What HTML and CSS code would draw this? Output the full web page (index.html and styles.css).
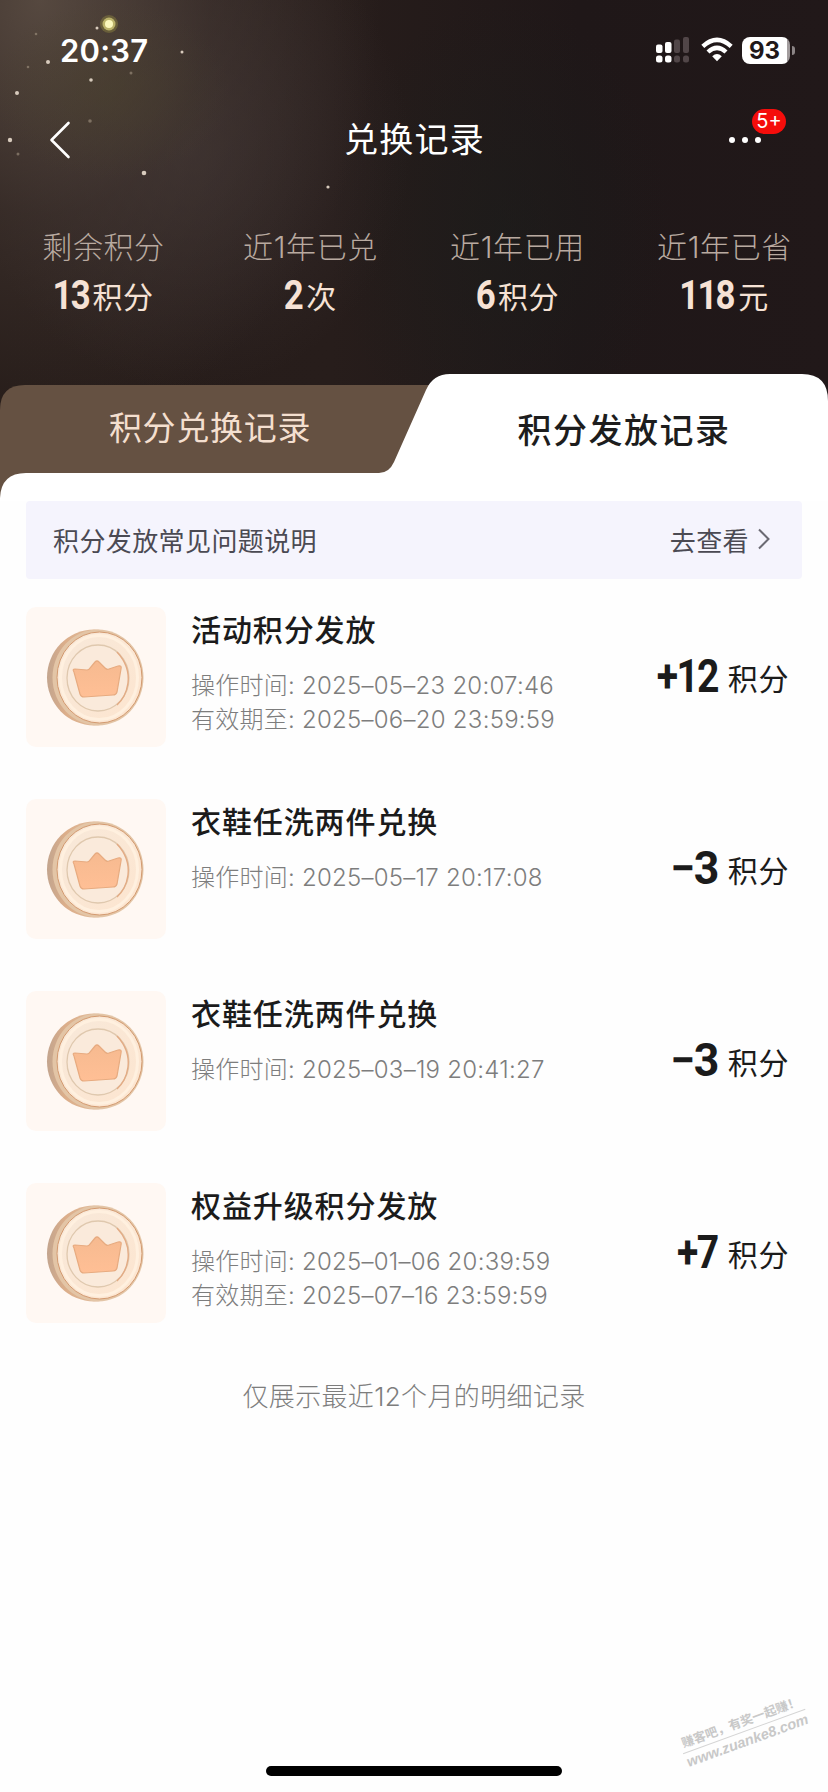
FILE: index.html
```
<!DOCTYPE html>
<html lang="zh-CN">
<head>
<meta charset="utf-8">
<title>兑换记录</title>
<link rel="stylesheet" href="styles.css">
</head>
<body>
<svg class="defs" width="0" height="0" aria-hidden="true">
  <defs>
    <linearGradient id="edge" x1="0" y1="0" x2="1" y2="0"><stop offset="0" stop-color="#c3a58e"/><stop offset=".2" stop-color="#dcae8a"/><stop offset="1" stop-color="#e6cdb0"/></linearGradient>
    <linearGradient id="face" x1="0" y1="0" x2="1" y2="1"><stop offset="0" stop-color="#f8e9da"/><stop offset="1" stop-color="#fde5cf"/></linearGradient>
    <linearGradient id="crown" x1="0" y1="0" x2="0" y2="1"><stop offset="0" stop-color="#f6ba90"/><stop offset="1" stop-color="#ffbf95"/></linearGradient>
    <symbol id="coin" viewBox="0 0 140 140">
      <ellipse cx="68" cy="70.500" rx="47" ry="48" fill="url(#edge)"/>
      <ellipse cx="72" cy="70.500" rx="45.5" ry="48" fill="#e3c5a6"/>
      <ellipse cx="73.500" cy="70.500" rx="42.5" ry="45.5" fill="url(#face)" stroke="#d39a70" stroke-width="1"/>
      <ellipse cx="73" cy="70.500" rx="38.500" ry="42" fill="none" stroke="#fff0df" stroke-width="3"/>
      <ellipse cx="72" cy="71" rx="31" ry="33" fill="#faeadb" stroke="#dfc8ae" stroke-width="1.300"/>
      <path d="M91 45Q104 59 102 76Q100 90 91 98" fill="none" stroke="#e3ab84" stroke-width="1.400"/>
      <path d="M48 65Q46 62 49 62L61 63Q63 63 64 61L69 55Q71 53 73 55L79 61Q81 63 83 62L92 59Q96 58 95 62L91 85Q90 88 87 88L58 90Q55 90 54 87Z" fill="url(#crown)" stroke="#e7ab80" stroke-width="1.200"/>
    </symbol>
  </defs>
</svg>
<div class="screen">
  <header class="hero">
    <svg class="sparkles" viewBox="0 0 400 200" aria-hidden="true">
      <circle cx="109" cy="24" r="9" fill="#a39b45" opacity=".35"/>
      <circle cx="109" cy="24" r="6.500" fill="#cfc877" opacity=".8"/>
      <circle cx="109" cy="24" r="4" fill="#fbf8bd"/>
      <g fill="#d8cbbd">
        <circle cx="97" cy="28" r="1.500"/><circle cx="48" cy="62" r="2"/><circle cx="182" cy="52" r="1.500"/>
        <circle cx="91" cy="80" r="1.800"/><circle cx="17" cy="93" r="2"/><circle cx="10" cy="140" r="2.200"/>
        <circle cx="144" cy="173" r="2.300"/><circle cx="328" cy="187" r="1.600"/>
      </g>
      <g fill="#a39482" opacity=".6">
        <circle cx="131" cy="73" r="1.500"/><circle cx="90" cy="121" r="1.800"/><circle cx="18" cy="154" r="1.500"/>
        <circle cx="36" cy="34" r="1.300"/><circle cx="28" cy="67" r="1.300"/>
      </g>
    </svg>
    <div class="status">
      <span class="clock">20:37</span>
      <div class="indicators">
        <svg width="34" height="28" viewBox="0 0 34 28">
          <g fill="#fff"><rect x="0" y="8.500" width="6.500" height="8.500" rx="2"/><rect x="9" y="6" width="6.500" height="11" rx="2"/><rect x="0" y="19.500" width="6.500" height="7" rx="2.500"/><rect x="9" y="19.500" width="6.500" height="7" rx="2.500"/></g>
          <g fill="#514648"><rect x="18" y="3.500" width="6" height="13.500" rx="2"/><rect x="27" y="1" width="6" height="16" rx="2"/><rect x="18" y="19.500" width="6" height="7" rx="2.500"/><rect x="27" y="19.500" width="6" height="7" rx="2.500"/></g>
        </svg>
        <svg class="wifi" width="32" height="26" viewBox="0 0 32 26">
          <g fill="none" stroke="#fff" stroke-width="4.400"><path d="M1.800 9.300Q16-3.500 30.200 9.300"/><path d="M7 15Q16 6.700 25 15"/></g>
          <path d="M11.200 19.200Q16 14.800 20.800 19.200L16 24.300Z" fill="#fff"/>
        </svg>
        <span class="battery">93</span><i class="battery-cap"></i>
      </div>
    </div>
    <nav class="nav">
      <svg class="back" width="22" height="38" viewBox="0 0 22 38"><path d="M19.500 2L2.500 19L19.500 36" fill="none" stroke="#fff" stroke-width="2.600" stroke-linecap="round" stroke-linejoin="round"/></svg>
      <h1 class="title">兑换记录</h1>
      <div class="more"><i></i><i></i><i></i><span class="badge">5+</span></div>
    </nav>
    <div class="stats">
      <div class="stat"><div class="label">剩余积分</div><div class="value"><b>13</b>积分</div></div>
      <div class="stat"><div class="label">近1年已兑</div><div class="value"><b class="single">2</b>次</div></div>
      <div class="stat"><div class="label">近1年已用</div><div class="value"><b class="single">6</b>积分</div></div>
      <div class="stat"><div class="label">近1年已省</div><div class="value"><b class="wide">118</b>元</div></div>
    </div>
  </header>
  <div class="tabs">
    <svg class="tabs-shape" width="828" height="127" viewBox="0 0 828 127" aria-hidden="true">
      <path d="M0 127V36Q0 11 25 11H440V127Z" fill="#655142"/>
      <path d="M0 127V124Q1 99 26 99H379Q389 99 394 88L426 16Q433 0 450 0H802Q828 0 828 27V127Z" fill="#fff"/>
    </svg>
    <div class="tab">积分兑换记录</div>
    <div class="tab active">积分发放记录</div>
  </div>
  <main class="panel">
    <div class="faq"><span>积分发放常见问题说明</span><span class="go">去查看<svg width="14" height="22" viewBox="0 0 14 22"><path d="M2 1.500L11.500 11L2 20.500" fill="none" stroke="#6b6a73" stroke-width="2"/></svg></span></div>
    <div class="list">
      <div class="row">
        <div class="thumb"><svg width="140" height="140"><use href="#coin"/></svg></div>
        <div class="info"><h2>活动积分发放</h2><p>操作时间: 2025–05–23 20:07:46</p><p>有效期至: 2025–06–20 23:59:59</p></div>
        <div class="amount"><b>+12</b>积分</div>
      </div>
      <div class="row">
        <div class="thumb"><svg width="140" height="140"><use href="#coin"/></svg></div>
        <div class="info"><h2>衣鞋任洗两件兑换</h2><p>操作时间: 2025–05–17 20:17:08</p></div>
        <div class="amount"><b class="spent">−3</b>积分</div>
      </div>
      <div class="row">
        <div class="thumb"><svg width="140" height="140"><use href="#coin"/></svg></div>
        <div class="info"><h2>衣鞋任洗两件兑换</h2><p>操作时间: 2025–03–19 20:41:27</p></div>
        <div class="amount"><b class="spent">−3</b>积分</div>
      </div>
      <div class="row">
        <div class="thumb"><svg width="140" height="140"><use href="#coin"/></svg></div>
        <div class="info"><h2>权益升级积分发放</h2><p>操作时间: 2025–01–06 20:39:59</p><p>有效期至: 2025–07–16 23:59:59</p></div>
        <div class="amount"><b>+7</b>积分</div>
      </div>
    </div>
    <p class="note">仅展示最近12个月的明细记录</p>
  </main>
  <div class="watermark"><div class="slogan">赚客吧，有奖一起赚！</div><div class="site">www.zuanke8.com</div></div>
  <i class="home"></i>
</div>
</body>
</html>
```
FILE: styles.css
```
* { box-sizing: border-box; margin: 0; padding: 0; }
body { background: #fefefe; font-family: Inter, "Noto Sans CJK SC", sans-serif; color: #1b1b1b; }
i { display: block; }
.defs { position: absolute; }
.screen { position: relative; width: 828px; height: 1792px; overflow: hidden; display: flex; flex-direction: column; background: #fefefe; }

.hero {
  position: relative;
  height: 420px;
  margin-bottom: -46px;
  flex: none;
  background:
    radial-gradient(ellipse 120px 90px at 110px 90px, rgba(74, 66, 42, .4), transparent),
    radial-gradient(ellipse 340px 430px at 40px 0, rgba(94, 80, 70, .85), rgba(75, 62, 56, .45) 50%, transparent),
    radial-gradient(ellipse 220px 240px at 190px 150px, rgba(66, 56, 57, .55), transparent),
    radial-gradient(ellipse 170px 230px at 500px 230px, rgba(26, 30, 28, .5), transparent),
    linear-gradient(90deg, #261c19, #271d1b 40%, #1f1718 70%, #211819);
}
.sparkles { position: absolute; left: 0; top: 0; width: 400px; height: 200px; }
.status { position: relative; display: flex; justify-content: space-between; align-items: center; height: 98px; padding: 2px 33px 0 60px; color: #fff; }
.clock { font-size: 31px; font-weight: 600; letter-spacing: .2px; }
.indicators { display: flex; align-items: center; }
.wifi { margin: 0 9px 0 11px; }
.battery { width: 48px; height: 27px; border-radius: 8px; background: linear-gradient(90deg, #fff 45px, #a29c9d 45px); color: #211819; font-size: 24px; font-weight: 700; line-height: 27px; text-align: center; padding-right: 3px; }
.battery-cap { width: 3px; height: 9px; margin-left: 2px; border-radius: 0 4px 4px 0; background: #8b8485; }

.nav { position: relative; display: grid; grid-template-columns: 120px 1fr 120px; align-items: center; height: 84px; color: #fff; }
.back { margin-left: 49px; }
.title { padding-left: 1px; font-size: 34px; font-weight: 400; letter-spacing: 1.2px; line-height: 50px; text-align: center; }
.more { position: relative; display: flex; gap: 7px; padding-left: 21px; }
.more i { width: 6px; height: 6px; border-radius: 50%; background: #fff; }
.badge { position: absolute; left: 44px; top: -28px; width: 34px; height: 25px; border-radius: 13px; background: #f50d0b; font-size: 20px; line-height: 25px; text-align: center; }

.stats { position: relative; display: grid; grid-template-columns: repeat(4, 207px); padding-top: 40px; text-align: center; }
.label { font-size: 30px; letter-spacing: .6px; line-height: 50px; color: #b9aaa0; font-weight: 300; }
.value { display: flex; align-items: baseline; justify-content: center; gap: 4px; margin-top: -2px; font-size: 30px; letter-spacing: .4px; line-height: 50px; color: #f6e2d5; }
.value b { font: 700 40px/50px Roboto, sans-serif; letter-spacing: -2px; margin-left: -7px; transform: translateY(1px) scaleX(.87); transform-origin: right; }
.value .single { margin-left: -3px; }
.value .wide { margin-left: -9px; }

.tabs { position: relative; display: flex; height: 127px; flex: none; }
.tabs-shape { position: absolute; left: 0; top: 0; }
.tab { position: relative; width: 420px; padding-top: 29px; font-size: 33px; letter-spacing: .7px; line-height: 50px; text-align: center; color: #f4dfcf; }
.tab.active { width: 408px; padding: 32px 0 0; font-size: 34px; letter-spacing: 1.5px; font-weight: 500; color: #1d1d1d; }

.panel { padding: 0 26px; background: #fefefe; }
.faq { display: flex; justify-content: space-between; align-items: center; height: 78px; padding: 0 31px 2px 27px; border-radius: 4px; background: #f5f4fd; color: #4b4a53; font-size: 26px; letter-spacing: .4px; }
.go { display: flex; align-items: center; gap: 8px; }
.list { display: flex; flex-direction: column; gap: 52px; padding: 28px 0 54px; }
.row { display: flex; height: 140px; padding-right: 13px; }
.thumb { width: 140px; height: 140px; border-radius: 10px; background: #fff8f3; }
.info { flex: 1; padding-left: 25px; }
.info h2 { margin: -1px 0 15px; font-size: 30px; font-weight: 500; letter-spacing: .9px; line-height: 48px; }
.info p { font-size: 24px; font-weight: 300; letter-spacing: .25px; line-height: 34px; color: #7d7d7d; white-space: nowrap; }
.amount { display: flex; align-items: baseline; padding-top: 42px; gap: 10px; font-size: 30px; letter-spacing: .6px; line-height: 50px; }
.amount b { font: 700 46px/50px Roboto, sans-serif; letter-spacing: -2px; transform: translateY(2px) scaleX(.85); transform-origin: right; }
.amount .spent { transform: translateY(2px) scaleX(.97); letter-spacing: -1.5px; }
.note { font-size: 26px; font-weight: 300; letter-spacing: .35px; line-height: 40px; text-align: center; color: #7d7d7d; }

.watermark { position: absolute; left: 679px; top: 1712px; width: 130px; transform: rotate(-20deg); color: #c8c8c8; text-align: center; white-space: nowrap; }
.slogan { font-size: 12.500px; line-height: 19px; font-weight: 700; border-bottom: 1px solid #d5d5d5; }
.site { font: italic 700 14.500px/18px "Liberation Sans", sans-serif; }
.home { position: absolute; left: 266px; top: 1766px; width: 296px; height: 10px; border-radius: 5px; background: #000; }
```
